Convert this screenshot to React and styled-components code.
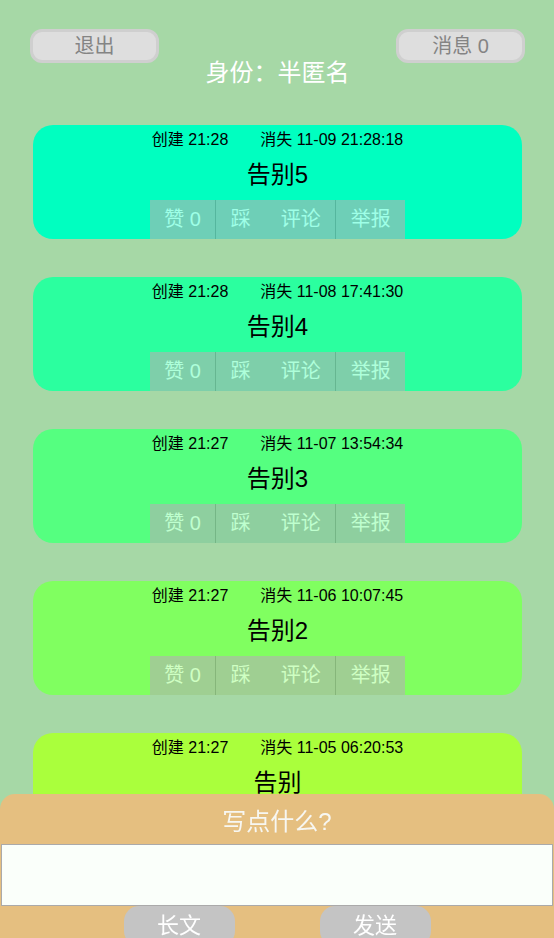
import React from 'react'
import styled, { createGlobalStyle } from 'styled-components'

const GlobalStyle = createGlobalStyle`
    html, body {
        margin: 0;
        padding: 0;
        background-color: #a6d8a6;
        font-family: "Liberation Sans", Arial, "Noto Sans CJK SC", sans-serif;
        scrollbar-width: none;
    }
    body::-webkit-scrollbar {
        display: none;
    }
    * {
        box-sizing: border-box;
    }
`

export const Page = styled.div `
    min-height: 100vh;
    padding-bottom: 170px;
`

export const Header = styled.header `
    padding: 29px 29px 0 30px;
`

export const TopRow = styled.div `
    display: flex;
    justify-content: space-between;
`

export const TopButton = styled.button `
    width: 129px;
    height: 34px;
    padding: 0;
    border: 3px solid #cfcfcf;
    border-radius: 12px;
    background-color: #dedede;
    color: #848484;
    font-family: inherit;
    font-size: 20px;
    line-height: 28px;
`

export const Identity = styled.div `
    margin-top: -4px;
    color: #fff;
    font-size: 24px;
    line-height: 28px;
    text-align: center;
`

export const CardList = styled.div `
    display: flex;
    flex-direction: column;
    gap: 38px;
    margin: 38px 32px 0 33px;
`

export const Card = styled.div `
    display: flex;
    flex-direction: column;
    align-items: center;
    padding-top: 5px;
    border-radius: 20px;
    background-color: ${p => p.$color};
    color: #000;
`

export const Meta = styled.div `
    display: flex;
    gap: 32px;
    font-size: 16px;
    line-height: 20px;
`

export const Title = styled.div `
    font-size: 24px;
    line-height: 50px;
`

export const Actions = styled.div `
    display: flex;
    height: 39px;
    background-color: #b2b2b2;
    opacity: 0.62;
`

export const Action = styled.span `
    padding: 0 14.5px;
    color: #fff;
    font-size: 20px;
    line-height: 39px;
    border-left: 1px solid ${p => p.$divider ? '#8a8a8a' : 'transparent'};

    &:first-child {
        border-left: none;
    }
`

export const Composer = styled.div `
    position: fixed;
    left: 0;
    right: 0;
    bottom: -8px;
    padding-top: 6px;
    border-radius: 15px 15px 0 0;
    background-color: #e5bf80;
`

export const ComposerTitle = styled.div `
    color: #f7f7f2;
    font-size: 24px;
    line-height: 44px;
    text-align: center;
`

export const Input = styled.textarea `
    display: block;
    width: calc(100% - 2px);
    height: 62px;
    margin: 0 1px;
    border: 1px solid #aaa;
    background-color: #fafffa;
    resize: none;
`

export const ComposerButtons = styled.div `
    display: flex;
    justify-content: center;
    gap: 85px;
`

export const ComposerButton = styled.button `
    width: 111px;
    height: 40px;
    padding: 0;
    border: none;
    border-radius: 15px;
    background-color: #c4c4c4;
    color: #fff;
    font-family: inherit;
    font-size: 22px;
    line-height: 40px;
`

const posts = [
    { color: '#00ffc0', created: '21:28', expires: '11-09 21:28:18', title: '告别5' },
    { color: '#2bff9f', created: '21:28', expires: '11-08 17:41:30', title: '告别4' },
    { color: '#55ff80', created: '21:27', expires: '11-07 13:54:34', title: '告别3' },
    { color: '#80ff60', created: '21:27', expires: '11-06 10:07:45', title: '告别2' },
    { color: '#aaff3c', created: '21:27', expires: '11-05 06:20:53', title: '告别' },
]

const App = () => {
    return (
        <Page>
            <GlobalStyle />
            <Header>
                <TopRow>
                    <TopButton>退出</TopButton>
                    <TopButton>消息 0</TopButton>
                </TopRow>
                <Identity>身份：半匿名</Identity>
            </Header>
            <CardList>
                {posts.map(post => (
                    <Card key={post.title} $color={post.color}>
                        <Meta>
                            <span>创建 {post.created}</span>
                            <span>消失 {post.expires}</span>
                        </Meta>
                        <Title>{post.title}</Title>
                        <Actions>
                            <Action>赞 0</Action>
                            <Action $divider>踩</Action>
                            <Action>评论</Action>
                            <Action $divider>举报</Action>
                        </Actions>
                    </Card>
                ))}
            </CardList>
            <Composer>
                <ComposerTitle>写点什么?</ComposerTitle>
                <Input />
                <ComposerButtons>
                    <ComposerButton>长文</ComposerButton>
                    <ComposerButton>发送</ComposerButton>
                </ComposerButtons>
            </Composer>
        </Page>
    )
}

export default App
